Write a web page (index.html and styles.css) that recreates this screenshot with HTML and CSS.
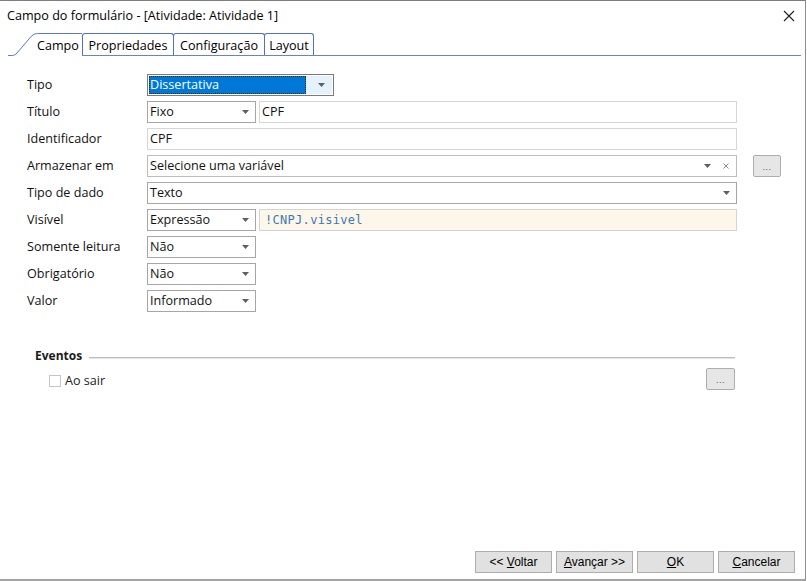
FILE: index.html
```html
<!DOCTYPE html>
<html lang="pt-BR">
<head>
<meta charset="utf-8">
<title>Campo do formulário</title>
<link rel="stylesheet" href="styles.css">
</head>
<body>
<div class="window">
  <header class="titlebar">
    <span class="title">Campo do formulário - [Atividade: Atividade 1]</span>
    <svg class="close" width="12" height="12" viewBox="0 0 12 12" aria-hidden="true"><path d="M1 1L11 11M11 1L1 11" stroke="#1e1e1e" stroke-width="1.1" fill="none"/></svg>
  </header>

  <nav class="tabs">
    <div class="tab tab-active">
      <svg class="tab-shape" width="74" height="23" viewBox="0 0 74 23" aria-hidden="true"><path d="M0 22.5H4.5Q7 22.5 9 20L23.5 3Q26 0.5 29.5 0.5H74" fill="none" stroke="#5a7cc0"/></svg>
      <span class="tab-label">Campo</span>
    </div>
    <div class="tab tab-wide">Propriedades</div>
    <div class="tab tab-wide">Configuração</div>
    <div class="tab tab-small">Layout</div>
  </nav>

  <section class="form">
    <span class="lbl">Tipo</span>
    <div class="ctl-row">
      <div class="combo combo-focus w187">
        <span class="combo-sel">Dissertativa</span>
        <span class="combo-btn"><svg class="caret" width="7" height="4" viewBox="0 0 7 4"><path d="M0 0H7L3.5 4Z" fill="#5f5f5f"/></svg></span>
      </div>
    </div>

    <span class="lbl">Título</span>
    <div class="ctl-row">
      <div class="combo w109"><span class="combo-text">Fixo</span><svg class="caret" width="7" height="4" viewBox="0 0 7 4"><path d="M0 0H7L3.5 4Z" fill="#5f5f5f"/></svg></div>
      <div class="input w478">CPF</div>
    </div>

    <span class="lbl">Identificador</span>
    <div class="ctl-row">
      <div class="input w590">CPF</div>
    </div>

    <span class="lbl">Armazenar em</span>
    <div class="ctl-row gap16">
      <div class="combo combo-light w590">
        <span class="combo-text">Selecione uma variável</span>
        <svg class="caret" width="7" height="4" viewBox="0 0 7 4"><path d="M0 0H7L3.5 4Z" fill="#5f5f5f"/></svg>
        <svg class="clear" width="6" height="6" viewBox="0 0 6 6"><path d="M0.5 0.5L5.5 5.5M5.5 0.5L0.5 5.5" stroke="#8a8a8a" stroke-width="1"/></svg>
      </div>
      <div class="dots-btn">...</div>
    </div>

    <span class="lbl">Tipo de dado</span>
    <div class="ctl-row">
      <div class="combo w590"><span class="combo-text">Texto</span><svg class="caret" width="7" height="4" viewBox="0 0 7 4"><path d="M0 0H7L3.5 4Z" fill="#5f5f5f"/></svg></div>
    </div>

    <span class="lbl">Visível</span>
    <div class="ctl-row">
      <div class="combo w109"><span class="combo-text">Expressão</span><svg class="caret" width="7" height="4" viewBox="0 0 7 4"><path d="M0 0H7L3.5 4Z" fill="#5f5f5f"/></svg></div>
      <div class="input input-expr w478">!CNPJ.visivel</div>
    </div>

    <span class="lbl">Somente leitura</span>
    <div class="ctl-row">
      <div class="combo w109"><span class="combo-text">Não</span><svg class="caret" width="7" height="4" viewBox="0 0 7 4"><path d="M0 0H7L3.5 4Z" fill="#5f5f5f"/></svg></div>
    </div>

    <span class="lbl">Obrigatório</span>
    <div class="ctl-row">
      <div class="combo w109"><span class="combo-text">Não</span><svg class="caret" width="7" height="4" viewBox="0 0 7 4"><path d="M0 0H7L3.5 4Z" fill="#5f5f5f"/></svg></div>
    </div>

    <span class="lbl">Valor</span>
    <div class="ctl-row">
      <div class="combo w109"><span class="combo-text">Informado</span><svg class="caret" width="7" height="4" viewBox="0 0 7 4"><path d="M0 0H7L3.5 4Z" fill="#5f5f5f"/></svg></div>
    </div>
  </section>

  <section class="events">
    <div class="events-head">
      <span class="events-title">Eventos</span>
      <span class="rule"></span>
    </div>
    <div class="events-row">
      <label class="check-label"><span class="checkbox"></span><span>Ao sair</span></label>
      <div class="dots-btn dots-btn-ev">...</div>
    </div>
  </section>

  <footer class="footer">
    <button class="btn">&lt;&lt; <u>V</u>oltar</button>
    <button class="btn"><u>A</u>vançar &gt;&gt;</button>
    <button class="btn"><u>O</u>K</button>
    <button class="btn"><u>C</u>ancelar</button>
  </footer>
</div>
</body>
</html>
```

FILE: styles.css
```css
* { box-sizing: border-box; margin: 0; padding: 0; }

html, body {
  width: 807px;
  height: 581px;
  overflow: hidden;
  background: #ffffff;
}

body {
  font-family: "Open Sans", "Noto Sans", sans-serif;
  font-size: 12.6px;
  color: #111;
}

.window {
  width: 806px;
  height: 581px;
  border-top: 1px solid #7d7d7d;
  border-right: 1px solid #8c8c8c;
  border-bottom: 2px solid #a3a3a3;
  display: flex;
  flex-direction: column;
  background: #fff;
}

/* title bar */
.titlebar {
  height: 32px;
  display: flex;
  align-items: center;
  padding: 0 10px 2px 7px;
}

.title {
  flex: 1;
  line-height: 16px;
  color: #000;
}

.close { display: block; }

/* tabs */
.tabs {
  height: 23px;
  margin: 0 4px 0 8px;
  display: flex;
  align-items: flex-end;
  border-bottom: 1px solid #6684bd;
}

.tab {
  height: 22px;
  border: 1px solid #4e73b8;
  border-bottom: 0;
  border-radius: 3px 3px 0 0;
  background: #fff;
  text-align: center;
  line-height: 17px;
  padding-top: 3px;
  color: #000;
  margin-left: -1px;
  white-space: nowrap;
}

.tab-wide { width: 92px; }
.tab-small { width: 50px; }

.tab-active {
  position: relative;
  width: 74px;
  height: 23px;
  margin: 0 0 -1px 0;
  border: 0;
  border-radius: 0;
  text-align: left;
  padding-left: 29px;
  padding-top: 4px;
  z-index: 1;
}

.tab-active + .tab { margin-left: 0; }

.tab-shape {
  position: absolute;
  left: 0;
  top: 0;
}

.tab-label { position: relative; }

/* form */
.form {
  margin-top: 18px;
  padding-left: 27px;
  display: grid;
  grid-template-columns: 120px 680px;
  grid-auto-rows: 22px;
  row-gap: 5px;
  align-items: center;
}

.lbl {
  line-height: 16px;
  color: #111;
  white-space: nowrap;
}

.ctl-row {
  display: flex;
  align-items: center;
  gap: 3px;
  height: 22px;
}

.gap16 { gap: 16px; }

.w109 { width: 109px; }
.w187 { width: 187px; }
.w478 { width: 478px; }
.w590 { width: 590px; }

.combo {
  height: 22px;
  display: flex;
  align-items: center;
  border: 1px solid #a6a6a6;
  background: #fff;
  padding: 0 6px 0 2px;
}

.combo-light { border-color: #bdbdbd; }

.combo-text {
  flex: 1;
  line-height: 16px;
  white-space: nowrap;
}

.caret { display: block; flex: none; }

.clear {
  display: block;
  flex: none;
  margin-left: 12px;
  margin-right: 1px;
}

.combo-focus {
  border-color: #7a7a7a;
  padding: 1px;
  align-items: stretch;
}

.combo-sel {
  width: 157px;
  background: #0078d7;
  color: #fff;
  outline: 1px dotted #3a2a10;
  outline-offset: -1px;
  padding-left: 1px;
  line-height: 18px;
}

.combo-btn {
  flex: 1;
  background: #e5f1fb;
  display: flex;
  align-items: center;
  justify-content: flex-end;
  padding-right: 7px;
}

.input {
  height: 22px;
  border: 1px solid #d7d7d7;
  background: #fff;
  padding-left: 2px;
  line-height: 20px;
  white-space: nowrap;
}

.input-expr {
  background: #fdf7ea;
  border-color: #d3d3d3;
  padding-left: 5px;
  font-family: "DejaVu Sans Mono", "Liberation Mono", monospace;
  font-size: 12px;
  letter-spacing: 0.3px;
  color: #3a78b8;
}

.dots-btn {
  width: 28px;
  height: 22px;
  border: 1px solid #adadad;
  border-radius: 2px;
  background: #e6e6e6;
  font-family: "Liberation Sans", sans-serif;
  font-size: 9px;
  line-height: 22px;
  text-align: center;
  color: #555;
  letter-spacing: 0.5px;
}

/* events */
.events {
  margin-top: 36px;
  padding: 0 70px 0 35px;
}

.events-head {
  display: flex;
  align-items: center;
  gap: 7px;
  height: 16px;
}

.events-title {
  font-weight: bold;
  font-size: 12px;
  line-height: 16px;
  color: #1a1a1a;
}

.rule {
  flex: 1;
  height: 2px;
  margin-top: 3px;
  border-top: 1px solid #bdbdbd;
  border-bottom: 1px solid #e4e4e4;
}

.events-row {
  margin-top: 4px;
  height: 22px;
  display: flex;
  align-items: center;
  justify-content: space-between;
}

.check-label {
  display: flex;
  align-items: center;
  gap: 4px;
  margin-left: 14px;
  margin-top: 4px;
  line-height: 16px;
  color: #222;
}

.checkbox {
  width: 12px;
  height: 12px;
  border: 1px solid #c6c6c6;
  background: #fff;
}

.dots-btn-ev { width: 29px; }

/* footer */
.footer {
  margin-top: auto;
  display: flex;
  justify-content: flex-end;
  gap: 4px;
  padding: 0 10px 6px 0;
}

.btn {
  width: 77px;
  height: 22px;
  border: 1px solid #adadad;
  background: #e1e1e1;
  font-family: "Liberation Sans", Arial, sans-serif;
  font-size: 12px;
  color: #000;
  line-height: 20px;
  text-align: center;
}
```
